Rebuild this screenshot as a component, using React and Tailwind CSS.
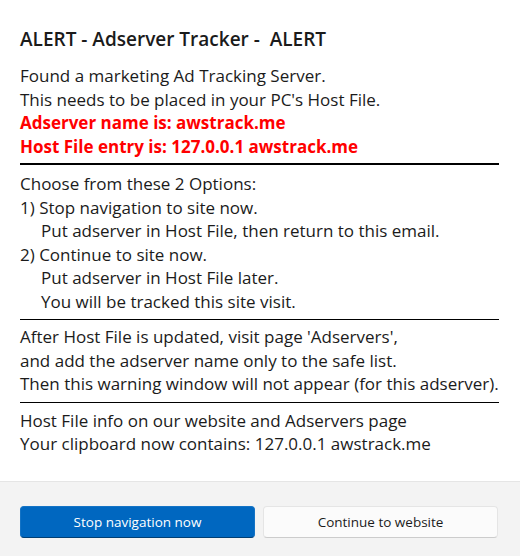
import React from 'react';

const font = { fontFamily: '"Open Sans", "Noto Sans", sans-serif' };

const AdserverAlert = () => {
  return (
    <div
      className="w-[520px] h-[556px] bg-white flex flex-col text-[#1b1b1b] font-['Open_Sans','Noto_Sans',sans-serif]"
      style={font}
    >
      <div className="flex-1 pl-5 pr-[21px] pt-[26px]">
        <h1 className="text-[19px] leading-[26px] font-semibold mb-[12px]">
          ALERT - Adserver Tracker - &nbsp;ALERT
        </h1>
        <div className="text-[17px] leading-[23.5px]">
          <div className="pb-[5px] border-b-2 border-black">
            <p>Found a marketing Ad Tracking Server.</p>
            <p>This needs to be placed in your PC's Host File.</p>
            <p className="font-bold text-[#ff0000]">Adserver name is: awstrack.me</p>
            <p className="font-bold text-[#ff0000]">Host File entry is: 127.0.0.1 awstrack.me</p>
          </div>
          <div className="pt-[7px] pb-[6px] border-b border-black">
            <p>Choose from these 2 Options:</p>
            <p>1) Stop navigation to site now.</p>
            <p className="pl-[21px]">Put adserver in Host File, then return to this email.</p>
            <p>2) Continue to site now.</p>
            <p className="pl-[21px]">Put adserver in Host File later.</p>
            <p className="pl-[21px]">You will be tracked this site visit.</p>
          </div>
          <div className="pt-[5px] pb-[6px] border-b border-black">
            <p>After Host File is updated, visit page 'Adservers',</p>
            <p>and add the adserver name only to the safe list.</p>
            <p className="whitespace-nowrap">Then this warning window will not appear (for this adserver).</p>
          </div>
          <div className="pt-[6px]">
            <p>Host File info on our website and Adservers page</p>
            <p>Your clipboard now contains: 127.0.0.1 awstrack.me</p>
          </div>
        </div>
      </div>
      <div className="h-[75px] bg-[#f3f3f3] border-t border-[#e5e5e5] pl-5 pr-[22px] pt-[24px]">
        <div className="grid grid-cols-2 gap-2">
          <button className="h-[32px] rounded-[4px] bg-[#0067c0] border border-[#1473c5] border-b-[#003e73] text-white text-[13.5px]">
            Stop navigation now
          </button>
          <button className="h-[32px] rounded-[4px] bg-[#fbfbfb] border border-[#e5e5e5] border-b-[#cccccc] text-[#1b1b1b] text-[13.5px]">
            Continue to website
          </button>
        </div>
      </div>
    </div>
  );
};

export default function App() {
  return <AdserverAlert />;
}
